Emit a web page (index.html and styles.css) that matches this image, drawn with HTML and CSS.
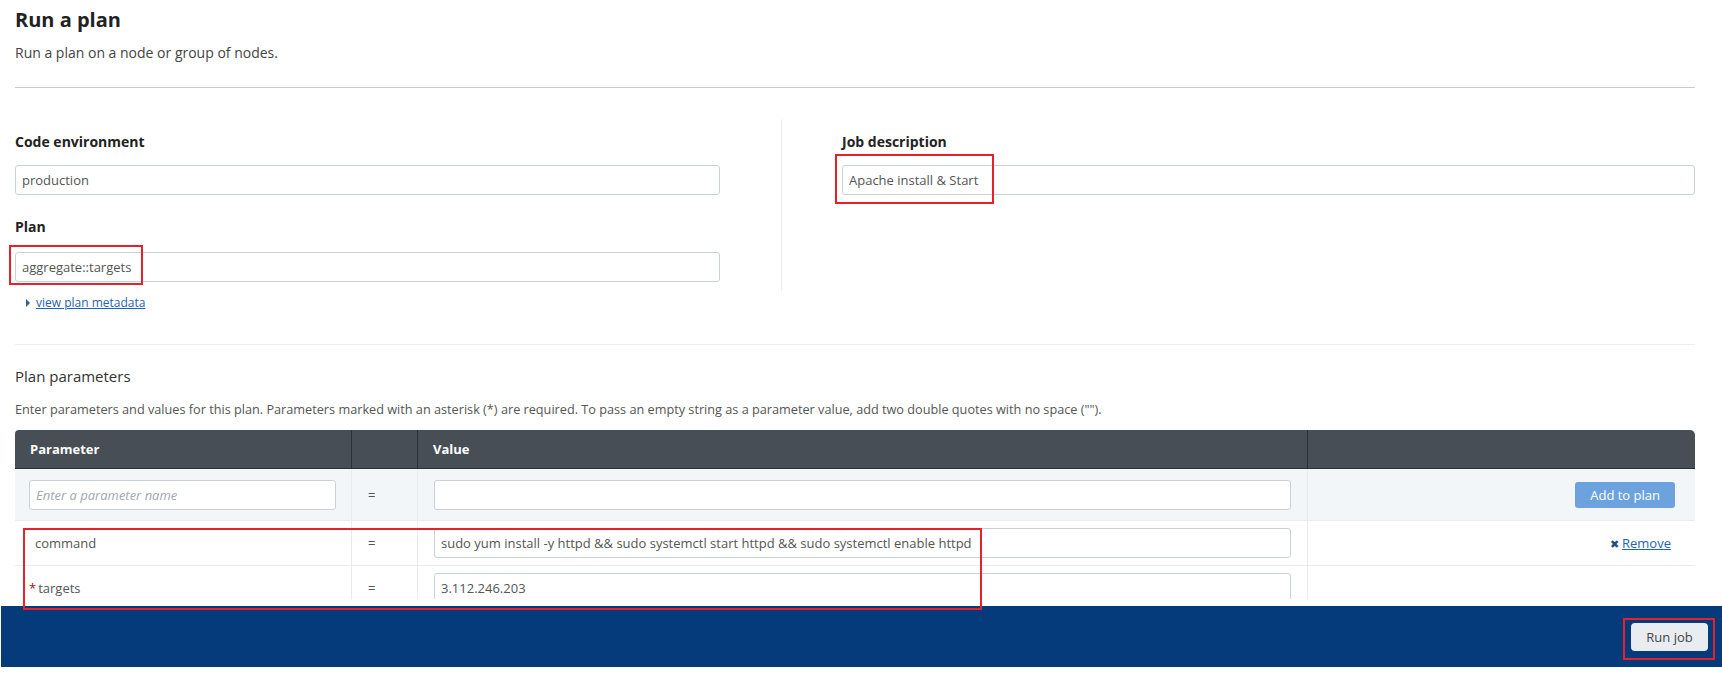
FILE: index.html
```html
<!DOCTYPE html>
<html lang="en">
<head>
    <meta charset="UTF-8">
    <meta name="viewport" content="width=device-width, initial-scale=1.0">
    <title>Run a plan</title>
    <link rel="stylesheet" href="styles.css">
</head>
<body>
    <div class="main">
        <div class="page-header">
            <h1>Run a plan</h1>
            <p>Run a plan on a node or group of nodes.</p>
        </div>

        <div class="form-columns">
            <!-- Left column -->
            <div class="col col-left">
                <label class="field-label" for="env">Code environment</label>
                <input class="field" id="env" type="text" value="production">
                <label class="field-label label-plan" for="plan">Plan</label>
                <input class="field" id="plan" type="text" value="aggregate::targets">
                <div class="metadata-link">
                    <span class="caret"></span>
                    <a href="#">view plan metadata</a>
                </div>
            </div>
            <!-- Right column -->
            <div class="col col-right">
                <label class="field-label" for="desc">Job description</label>
                <input class="field" id="desc" type="text" value="Apache install &amp; Start">
            </div>
        </div>

        <div class="params">
            <h2>Plan parameters</h2>
            <p class="params-help">Enter parameters and values for this plan. Parameters marked with an asterisk (*) are required. To pass an empty string as a parameter value, add two double quotes with no space ("").</p>

            <table class="params-table">
                <colgroup>
                    <col class="c-name">
                    <col class="c-eq">
                    <col class="c-value">
                    <col class="c-action">
                </colgroup>
                <thead>
                    <tr>
                        <th>Parameter</th>
                        <th></th>
                        <th>Value</th>
                        <th></th>
                    </tr>
                </thead>
                <tbody>
                    <tr class="row-new">
                        <td class="cell-name"><input class="field small" type="text" placeholder="Enter a parameter name"></td>
                        <td class="cell-eq">=</td>
                        <td class="cell-value"><input class="field small" type="text"></td>
                        <td class="cell-action"><button class="btn-add">Add to plan</button></td>
                    </tr>
                    <tr>
                        <td class="cell-name text">command</td>
                        <td class="cell-eq">=</td>
                        <td class="cell-value"><input class="field small" type="text" value="sudo yum install -y httpd &amp;&amp; sudo systemctl start httpd &amp;&amp; sudo systemctl enable httpd"></td>
                        <td class="cell-action"><a href="#" class="remove"><span class="remove-x">&#10006;</span> <span class="remove-text">Remove</span></a></td>
                    </tr>
                    <tr>
                        <td class="cell-name text required"><span class="star">*</span>targets</td>
                        <td class="cell-eq">=</td>
                        <td class="cell-value"><input class="field small" type="text" value="3.112.246.203"></td>
                        <td class="cell-action"></td>
                    </tr>
                </tbody>
            </table>
        </div>
    </div>

    <div class="footer-bar">
        <button class="btn-run">Run job</button>
    </div>

    <!-- annotation boxes from the screenshot -->
    <div class="mark mark-plan"></div>
    <div class="mark mark-desc"></div>
    <div class="mark mark-params"></div>
    <div class="mark mark-run"></div>
</body>
</html>
```

FILE: styles.css
```css
body {
    margin: 0;
    font-family: 'Open Sans', 'Liberation Sans', sans-serif;
    color: #333;
    background: #fff;
    position: relative;
}

.main {
    height: 599px;
    overflow: hidden;
    padding: 0 27px 0 15px;
}

.page-header {
    border-bottom: 1px solid #ccc;
    padding-top: 8px;
    padding-bottom: 24px;
}

h1 {
    margin: 0;
    font-size: 20px;
    line-height: 24px;
    font-weight: 700;
    color: #222;
}

.page-header p {
    margin: 11px 0 0;
    font-size: 14px;
    line-height: 20px;
    color: #444;
}

.form-columns {
    display: grid;
    grid-template-columns: 766px 1fr;
    margin-top: 31px;
    border-bottom: 1px solid #eee;
    padding-bottom: 33px;
}

.col {
    padding-top: 13px;
}

.col-left {
    padding-right: 61px;
}

.col-right {
    border-left: 1px solid #eee;
    padding-left: 60px;
    height: 159px;
}

.field-label {
    display: block;
    font-size: 14px;
    line-height: 20px;
    font-weight: 700;
    color: #222;
    margin-bottom: 13px;
}

.label-plan {
    margin-top: 22px;
    margin-bottom: 15px;
}

.field {
    display: block;
    box-sizing: border-box;
    width: 100%;
    height: 30px;
    padding: 0 6px;
    border: 1px solid #ccd1d7;
    border-radius: 3px;
    font-family: 'Open Sans', 'Liberation Sans', sans-serif;
    font-size: 13px;
    color: #555;
    background: #fff;
}

.field::placeholder {
    color: #a3a8ae;
    font-style: italic;
}

.metadata-link {
    margin-top: 13px;
    padding-left: 11px;
    font-size: 12px;
    line-height: 16px;
    display: flex;
    align-items: center;
    gap: 6px;
}

.caret {
    width: 0;
    height: 0;
    border-top: 4px solid transparent;
    border-bottom: 4px solid transparent;
    border-left: 4px solid #2f5f97;
}

.metadata-link a {
    color: #1f63b5;
}

.params h2 {
    margin: 20px 0 0;
    font-size: 15px;
    line-height: 22px;
    font-weight: 400;
    color: #333;
}

.params-help {
    margin: 13px 0 0;
    font-size: 12.7px;
    line-height: 18px;
    color: #555;
}

.params-table {
    margin-top: 12px;
    width: 100%;
    border-collapse: separate;
    border-spacing: 0;
    table-layout: fixed;
    font-size: 13px;
}

.c-name { width: 337px; }
.c-eq { width: 66px; }
.c-value { width: 890px; }

.params-table th {
    background: #474e56;
    color: #fff;
    text-align: left;
    font-size: 13px;
    font-weight: 700;
    height: 38px;
    padding: 0 15px;
    border-bottom: 1px solid #2d3237;
    border-right: 1px solid #2d3237;
}

.params-table th:first-child {
    border-top-left-radius: 4px;
}

.params-table th:last-child {
    border-right: none;
    border-top-right-radius: 5px;
}

.params-table td {
    border-right: 1px solid #e9ecef;
    border-bottom: 1px solid #e9ecef;
    color: #555;
}

.params-table td:last-child {
    border-right: none;
}

.row-new td {
    background: #f3f6f9;
    height: 49px;
}

.params-table tbody tr:not(.row-new) td {
    height: 42px;
}

.cell-name {
    padding: 0 15px 0 14px;
}

.cell-name.text {
    padding-left: 20px;
}

.cell-name.required {
    padding-left: 14px;
}

.star {
    color: #8b1a1a;
    margin-right: 2px;
}

.cell-eq {
    padding-left: 16px;
}

.cell-value {
    padding: 0 16px 0 16px;
}

.cell-action {
    text-align: right;
    padding-right: 20px;
}

.btn-add {
    background: #6ca3de;
    color: #fff;
    border: none;
    border-radius: 3px;
    height: 26px;
    padding: 0 15px;
    font-family: 'Open Sans', 'Liberation Sans', sans-serif;
    font-size: 13px;
}

.remove {
    color: #1f63b5;
    text-decoration: none;
    font-size: 13px;
    margin-right: 4px;
}

.remove-x {
    color: #1d4d86;
    font-size: 11px;
}

.remove-text {
    text-decoration: underline;
}

.footer-bar {
    margin-top: 7px;
    height: 61px;
    margin-left: 1px;
    background: #053b7a;
    display: flex;
    align-items: center;
    justify-content: flex-end;
    padding-right: 14px;
}

.btn-run {
    background: #e9edf1;
    color: #444;
    border: none;
    border-radius: 4px;
    height: 28px;
    width: 77px;
    font-family: 'Open Sans', 'Liberation Sans', sans-serif;
    font-size: 13px;
}

.mark {
    position: absolute;
    border: 2px solid #e8202a;
    box-sizing: border-box;
}

.mark-plan {
    left: 9px;
    top: 245px;
    width: 134px;
    height: 40px;
}

.mark-desc {
    left: 835px;
    top: 154px;
    width: 159px;
    height: 50px;
}

.mark-params {
    left: 23px;
    top: 528px;
    width: 959px;
    height: 82px;
}

.mark-run {
    left: 1623px;
    top: 618px;
    width: 92px;
    height: 42px;
}
```
